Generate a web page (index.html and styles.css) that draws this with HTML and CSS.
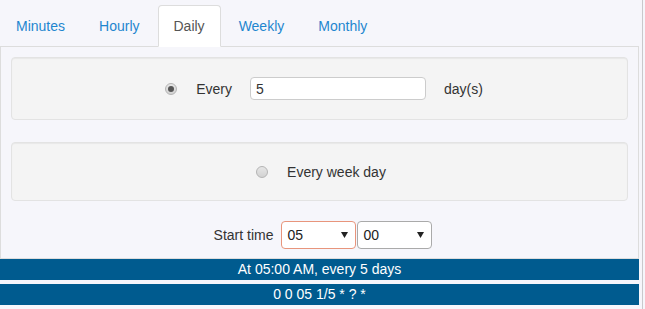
FILE: index.html
```html
<!DOCTYPE html>
<html lang="en">
<head>
    <meta charset="UTF-8">
    <meta name="viewport" content="width=device-width, initial-scale=1.0">
    <title>Cron Generator</title>
    <link rel="stylesheet" href="styles.css">
</head>
<body>
    <div class="page">
        <ul class="tabs">
            <li><a href="#">Minutes</a></li>
            <li><a href="#">Hourly</a></li>
            <li class="active"><a href="#">Daily</a></li>
            <li><a href="#">Weekly</a></li>
            <li><a href="#">Monthly</a></li>
        </ul>
        <div class="tab-content">
            <div class="well well-first">
                <div class="row">
                    <span class="radio checked"></span>
                    <span class="label">Every</span>
                    <input class="days" type="text" value="5">
                    <span class="label">day(s)</span>
                </div>
            </div>
            <div class="well">
                <div class="row row-small">
                    <span class="radio"></span>
                    <span class="label">Every week day</span>
                </div>
            </div>
            <div class="time-row">
                <span class="label">Start time</span>
                <div class="select focused">
                    <span>05</span>
                    <svg width="7" height="6" viewBox="0 0 7 6"><path d="M0 0h7L3.5 6z" fill="#222"/></svg>
                </div>
                <div class="select">
                    <span>00</span>
                    <svg width="7" height="6" viewBox="0 0 7 6"><path d="M0 0h7L3.5 6z" fill="#222"/></svg>
                </div>
            </div>
        </div>
        <div class="result">At 05:00 AM, every 5 days</div>
        <div class="result">0 0 05 1/5 * ? *</div>
    </div>
</body>
</html>
```

FILE: styles.css
```css
body {
    margin: 0;
    background-color: #f6f6fb;
    font-family: "Liberation Sans", Arial, sans-serif;
    font-size: 14px;
    color: #333;
}
.page {
    width: 643px;
    height: 309px;
    padding-top: 5px;
    box-sizing: border-box;
    border-right: 1px solid #c9c9cc;
}
.tabs {
    display: flex;
    list-style: none;
    margin: 0;
    padding: 0;
    width: 639px;
    border-bottom: 1px solid #ddd;
}
.tabs li {
    margin-right: 2px;
    margin-bottom: -1px;
}
.tabs a {
    display: block;
    padding: 10px 15px;
    line-height: 20px;
    border: 1px solid transparent;
    border-radius: 4px 4px 0 0;
    color: #1f86cf;
    text-decoration: none;
}
.tabs .active a {
    background-color: #fff;
    border-color: #ddd;
    border-bottom-color: transparent;
    color: #555;
}
.tab-content {
    width: 639px;
    box-sizing: border-box;
    border: 1px solid #ddd;
    border-top: none;
    padding: 10px 10px 9px;
}
.well {
    background-color: #f4f4f4;
    border: 1px solid #e3e3e3;
    border-radius: 4px;
    box-shadow: inset 0 1px 1px rgba(0, 0, 0, 0.05);
    padding: 19px;
    margin-bottom: 20px;
}
.well-first {
    margin-bottom: 22px;
}
.row {
    display: flex;
    align-items: center;
    justify-content: center;
    height: 23px;
    padding-left: 9px;
}
.row-small {
    height: 19px;
    padding-left: 3px;
}
.radio {
    width: 12px;
    height: 12px;
    border-radius: 50%;
    box-sizing: border-box;
    border: 1px solid #b4b4b4;
    background: linear-gradient(#e6e6e6, #d2d2d2);
    margin-right: 19px;
    display: flex;
    align-items: center;
    justify-content: center;
}
.radio.checked::after {
    content: "";
    width: 6px;
    height: 6px;
    border-radius: 50%;
    background-color: #555;
}
.days {
    width: 176px;
    height: 23px;
    box-sizing: border-box;
    margin: 0 18px;
    padding: 0 5px;
    border: 1px solid #ccc;
    border-radius: 4px;
    background-color: #fff;
    font-family: inherit;
    font-size: 14px;
    color: #333;
}
.time-row {
    display: flex;
    align-items: center;
    justify-content: center;
    padding-left: 8px;
}
.time-row .label {
    margin-right: 8px;
}
.select {
    width: 75px;
    height: 28px;
    box-sizing: border-box;
    border: 1px solid #aaa;
    border-radius: 4px;
    background-color: #fff;
    display: flex;
    align-items: center;
    justify-content: space-between;
    padding: 0 7px 0 5px;
    margin-right: 1px;
    color: #222;
}
.select.focused {
    border-color: #e8957c;
}
.result {
    width: 639px;
    height: 21px;
    line-height: 21px;
    background-color: #005b8f;
    color: #fff;
    text-align: center;
    margin-bottom: 4px;
}
```
